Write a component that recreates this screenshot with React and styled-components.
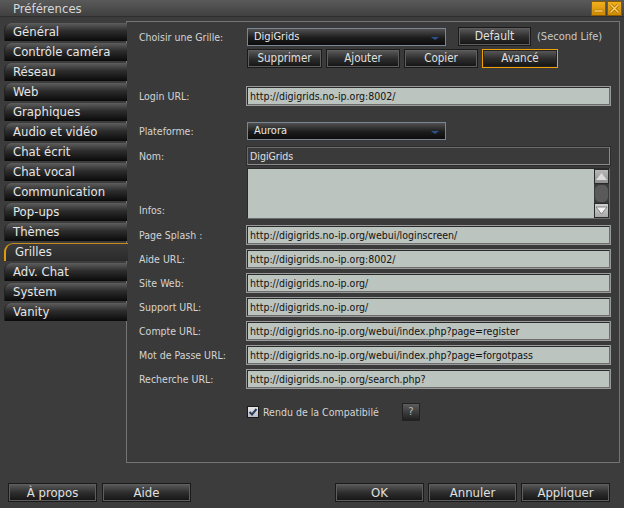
import React from 'react';
import styled, { createGlobalStyle, css } from 'styled-components';

const Global = createGlobalStyle`
	html, body {
		margin: 0;
		padding: 0;
		background: #3b3b3b;
	}
	* {
		box-sizing: border-box;
	}
`;

const Window = styled.div`
	width: 624px;
	height: 508px;
	background: #3c3c3c;
	display: flex;
	flex-direction: column;
	font-family: 'DejaVu Sans Condensed', 'DejaVu Sans', sans-serif;
	color: #e2e2e2;
	overflow: hidden;
`;

const TitleBar = styled.div`
	height: 17px;
	display: flex;
	align-items: center;
	padding: 0 2px 0 13px;
	background: linear-gradient(#5a5a5a, #404040);
	border-bottom: 1px solid #2e2e2e;
	font-size: 13px;
	color: #d8d8d8;
`;

const Title = styled.span`
	flex: 1;
`;

const TitleBtn = styled.div`
	width: 15px;
	height: 15px;
	margin-left: 1px;
	background: linear-gradient(#f0b020, #d08a00);
	border: 1px solid #8a5a00;
	display: flex;
	align-items: center;
	justify-content: center;
`;

const Body = styled.div`
	display: flex;
	padding: 4px 4px 0 4px;
	height: 446px;
`;

const Tabs = styled.div`
	width: 123px;
	display: flex;
	flex-direction: column;
	gap: 2px;
	margin-top: 2px;
	z-index: 1;
`;

const Tab = styled.div`
	height: 18px;
	border-radius: 7px 0 0 0;
	background: linear-gradient(#5e5e5e 0%, #2c2c2c 45%, #0a0a0a 100%);
	border-left: 1px solid #222;
	font-size: 13px;
	line-height: 18px;
	padding-left: 8px;
	color: #e6e6e6;
	white-space: nowrap;
	${p =>
		p.$active &&
		css`
			background: linear-gradient(#3a3a3a, #2a2a2a);
			border-top: 1px solid #c88a18;
			border-left: 2px solid #e09a10;
			border-radius: 9px 0 0 0;
			width: 124px;
			line-height: 16px;
			padding-left: 9px;
		`}
`;

const Panel = styled.div`
	flex: 1;
	margin-left: -1px;
	height: 442px;
	border: 1px solid #747474;
	background: #3a3a3a;
	padding: 5px 9px 0 12px;
	display: flex;
	flex-direction: column;
`;

const Row = styled.div`
	display: flex;
	align-items: center;
	margin-top: ${p => p.$mt || 0}px;
`;

const Label = styled.div`
	width: 108px;
	flex-shrink: 0;
	font-size: 10.5px;
	color: #d4d4d4;
	align-self: ${p => (p.$bottom ? 'flex-end' : 'center')};
	padding-bottom: ${p => (p.$bottom ? '3px' : '0')};
`;

const Combo = styled.div`
	width: 199px;
	height: 18px;
	border: 1px solid #7a8694;
	background: linear-gradient(#505050, #1c1c1c 55%, #0c0c0c);
	font-size: 11px;
	line-height: 16px;
	padding-left: 6px;
	position: relative;
	color: #e8e8e8;
`;

const ComboArrow = styled.span`
	position: absolute;
	right: 6px;
	top: 8px;
	width: 0;
	height: 0;
	border-left: 4px solid transparent;
	border-right: 4px solid transparent;
	border-top: 3px solid #2c5290;
`;

const Button = styled.div`
	width: ${p => p.$w}px;
	height: 19px;
	margin-right: ${p => p.$mr || 0}px;
	border: 1px solid ${p => (p.$focus ? '#f0a000' : '#1a1a1a')};
	box-shadow: inset 0 0 0 1px ${p => (p.$focus ? '#222' : '#5e5e5e')};
	background: linear-gradient(#5c5c5c, #2e2e2e 50%, #141414);
	font-size: ${p => p.$fs || 11.5}px;
	line-height: 17px;
	text-align: center;
	color: #e0e0e0;
	flex-shrink: 0;
`;

const Note = styled.span`
	font-size: 11px;
	color: #c8c8c8;
	margin-left: 6px;
`;

const Field = styled.div`
	flex: 1;
	height: 18px;
	background: ${p => (p.$dark ? '#3a3a3a' : '#bcc4bf')};
	border: 1px solid ${p => (p.$dark ? '#8a8a8a' : '#6c6c6c')};
	border-top-color: ${p => (p.$dark ? '#6a6a6a' : '#2a2a2a')};
	border-left-color: ${p => (p.$dark ? '#6a6a6a' : '#2a2a2a')};
	box-shadow: 0 0 0 1px ${p => (p.$dark ? '#2c2c2c' : '#9a9a9a')};
	font-size: 10.5px;
	line-height: 16px;
	padding-left: 2px;
	color: ${p => (p.$dark ? '#e0e0e0' : '#111')};
	white-space: nowrap;
	overflow: hidden;
`;

const TextArea = styled.div`
	flex: 1;
	height: 51px;
	background: #bcc4bf;
	border: 1px solid #6c6c6c;
	border-top-color: #2a2a2a;
	border-left-color: #2a2a2a;
	display: flex;
	justify-content: flex-end;
`;

const ScrollBar = styled.div`
	width: 15px;
	display: flex;
	flex-direction: column;
	background: #3a3a3a;
`;

const ScrollBtn = styled.div`
	height: 15px;
	background: ${p => (p.$down ? 'linear-gradient(#cfcfcf, #a8a8a8)' : 'linear-gradient(#b8b8b8, #909090)')};
	border: 1px solid #2a2a2a;
	display: flex;
	align-items: center;
	justify-content: center;
`;

const Thumb = styled.div`
	flex: 1;
	margin: 1px 1px;
	border-radius: 5px;
	background: #5a5a5a;
`;

const CheckRow = styled.div`
	display: flex;
	align-items: center;
	margin-top: 15px;
	padding-left: 108px;
	font-size: 10.5px;
	color: #d4d4d4;
`;

const Check = styled.div`
	width: 12px;
	height: 12px;
	border: 1px solid #1a1a1a;
	background: linear-gradient(#e8e8e8, #b8bcc8);
	display: flex;
	align-items: center;
	justify-content: center;
	margin-right: 4px;
`;

const Help = styled.div`
	width: 18px;
	height: 18px;
	margin-left: 23px;
	background: linear-gradient(#5c5c5c, #202020);
	border: 1px solid #222;
	font-size: 11px;
	line-height: 16px;
	text-align: center;
	color: #bbb;
`;

const Footer = styled.div`
	display: flex;
	padding: 20px 14px 0 8px;
`;

const Spacer = styled.div`
	flex: 1;
`;

const tabs = [
	'Général',
	'Contrôle caméra',
	'Réseau',
	'Web',
	'Graphiques',
	'Audio et vidéo',
	'Chat écrit',
	'Chat vocal',
	'Communication',
	'Pop-ups',
	'Thèmes',
	'Grilles',
	'Adv. Chat',
	'System',
	'Vanity'
];

const urls = [
	['Page Splash :', 'http://digigrids.no-ip.org/webui/loginscreen/'],
	['Aide URL:', 'http://digigrids.no-ip.org:8002/'],
	['Site Web:', 'http://digigrids.no-ip.org/'],
	['Support URL:', 'http://digigrids.no-ip.org/'],
	['Compte URL:', 'http://digigrids.no-ip.org/webui/index.php?page=register'],
	['Mot de Passe URL:', 'http://digigrids.no-ip.org/webui/index.php?page=forgotpass'],
	['Recherche URL:', 'http://digigrids.no-ip.org/search.php?']
];

export default function App() {
	return (
		<Window>
			<Global />
			<TitleBar>
				<Title>Préférences</Title>
				<TitleBtn>
					<svg width="11" height="11" viewBox="0 0 11 11">
						<rect x="1" y="7" width="9" height="2" fill="#ffd060" stroke="#a06800" strokeWidth="0.5" />
					</svg>
				</TitleBtn>
				<TitleBtn>
					<svg width="11" height="11" viewBox="0 0 11 11">
						<path d="M1.5 1.5 L9.5 9.5 M9.5 1.5 L1.5 9.5" stroke="#a06800" strokeWidth="3" />
						<path d="M1.5 1.5 L9.5 9.5 M9.5 1.5 L1.5 9.5" stroke="#ffd060" strokeWidth="1.6" />
					</svg>
				</TitleBtn>
			</TitleBar>
			<Body>
				<Tabs>
					{tabs.map(t => (
						<Tab key={t} $active={t === 'Grilles'}>
							{t}
						</Tab>
					))}
				</Tabs>
				<Panel>
					<Row>
						<Label>Choisir une Grille:</Label>
						<Combo>
							DigiGrids
							<ComboArrow />
						</Combo>
						<Button $w={73} style={{ marginLeft: 12 }} $fs={12}>
							Default
						</Button>
						<Note>(Second Life)</Note>
					</Row>
					<Row $mt={3}>
						<Label />
						<Button $w={75} $mr={4}>
							Supprimer
						</Button>
						<Button $w={74} $mr={4}>
							Ajouter
						</Button>
						<Button $w={74} $mr={4}>
							Copier
						</Button>
						<Button $w={76} $focus>
							Avancé
						</Button>
					</Row>
					<Row $mt={19}>
						<Label>Login URL:</Label>
						<Field>http://digigrids.no-ip.org:8002/</Field>
					</Row>
					<Row $mt={17}>
						<Label>Plateforme:</Label>
						<Combo>
							Aurora
							<ComboArrow />
						</Combo>
					</Row>
					<Row $mt={7}>
						<Label>Nom:</Label>
						<Field $dark>DigiGrids</Field>
					</Row>
					<Row $mt={3}>
						<Label $bottom>Infos:</Label>
						<TextArea>
							<ScrollBar>
								<ScrollBtn>
									<svg width="13" height="9" viewBox="0 0 13 9">
										<path d="M1 8 L6.5 1 L12 8 Z" fill="#dcdcdc" />
									</svg>
								</ScrollBtn>
								<Thumb />
								<ScrollBtn $down>
									<svg width="13" height="9" viewBox="0 0 13 9">
										<path d="M1 1 L6.5 8 L12 1 Z" fill="#f4f4f4" stroke="#707070" strokeWidth="0.8" />
									</svg>
								</ScrollBtn>
							</ScrollBar>
						</TextArea>
					</Row>
					{urls.map(([l, v], i) => (
						<Row key={l} $mt={i === 0 ? 7 : 6}>
							<Label>{l}</Label>
							<Field>{v}</Field>
						</Row>
					))}
					<CheckRow>
						<Check>
							<svg width="10" height="10" viewBox="0 0 10 10">
								<path d="M1.5 5 L4 7.5 L8.5 2" fill="none" stroke="#2a3a5a" strokeWidth="2" />
							</svg>
						</Check>
						Rendu de la Compatibilé
						<Help>?</Help>
					</CheckRow>
				</Panel>
			</Body>
			<Footer>
				<Button $w={89} $mr={5} $fs={13}>
					À propos
				</Button>
				<Button $w={89} $fs={13}>
					Aide
				</Button>
				<Spacer />
				<Button $w={89} $mr={4} $fs={13}>
					OK
				</Button>
				<Button $w={89} $mr={4} $fs={13}>
					Annuler
				</Button>
				<Button $w={89} $fs={13}>
					Appliquer
				</Button>
			</Footer>
		</Window>
	);
}
